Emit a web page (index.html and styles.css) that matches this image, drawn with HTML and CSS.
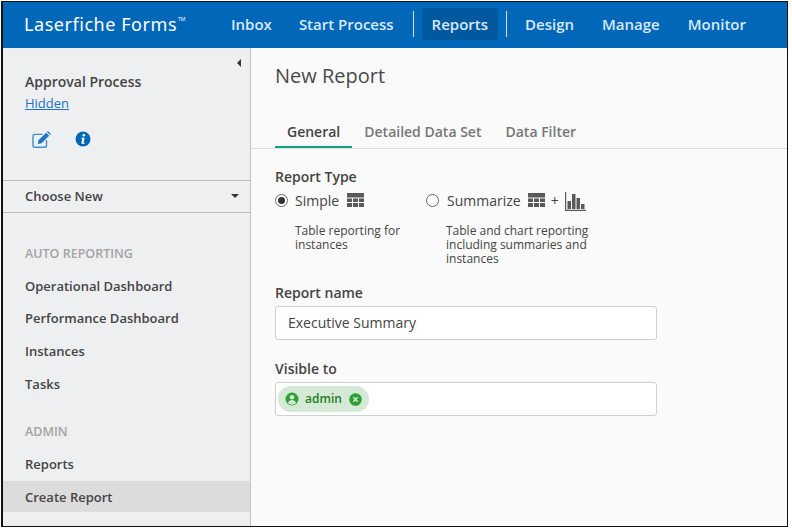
FILE: index.html
```html
<!DOCTYPE html>
<html lang="en">
<head>
    <meta charset="UTF-8">
    <title>New Report</title>
    <link rel="stylesheet" href="styles.css">
</head>
<body>
    <div class="frame">
        <header class="topbar">
            <div class="logo">Laserfiche Forms<span class="tm">TM</span></div>
            <nav class="nav">
                <a class="nav-item">Inbox</a>
                <a class="nav-item">Start Process</a>
                <span class="nav-sep"></span>
                <a class="nav-item active">Reports</a>
                <span class="nav-sep"></span>
                <a class="nav-item">Design</a>
                <a class="nav-item">Manage</a>
                <a class="nav-item">Monitor</a>
            </nav>
        </header>
        <div class="body-row">
            <aside class="sidebar">
                <div class="collapse-arrow"></div>
                <div class="process-info">
                    <div class="process-name">Approval Process</div>
                    <a class="process-link">Hidden</a>
                    <div class="process-icons">
                        <svg class="icon-edit" width="20" height="17" viewBox="0 0 20 17">
                            <path d="M14.500 9v5.500a1.800 1.800 0 0 1-1.800 1.800H2.800A1.800 1.800 0 0 1 1 14.500V5.200a1.800 1.800 0 0 1 1.800-1.800h7.700" fill="none" stroke="#3d8ed4" stroke-width="1.400"/>
                            <path d="M6.500 9.300l7.600-7.600 3 3-7.600 7.600-3.600.7z" fill="#1e74bf"/>
                            <path d="M15 .9l.9-.8 3 3-.8.9z" fill="#1e74bf"/>
                        </svg>
                        <svg class="icon-info" width="16" height="16" viewBox="0 0 16 16">
                            <circle cx="8" cy="8" r="7.500" fill="#0067b9"/>
                            <circle cx="8.800" cy="4.200" r="1.300" fill="#fff"/>
                            <path d="M6.400 6.700h3.200l-1 5h1v1H6.300l1-5h-1z" fill="#fff"/>
                        </svg>
                    </div>
                </div>
                <div class="choose-new">
                    <span>Choose New</span>
                    <span class="caret"></span>
                </div>
                <div class="side-section">
                    <div class="side-head">AUTO REPORTING</div>
                    <a class="side-item">Operational Dashboard</a>
                    <a class="side-item">Performance Dashboard</a>
                    <a class="side-item">Instances</a>
                    <a class="side-item">Tasks</a>
                </div>
                <div class="side-section admin">
                    <div class="side-head">ADMIN</div>
                    <a class="side-item">Reports</a>
                    <a class="side-item current">Create Report</a>
                </div>
            </aside>
            <main class="content">
                <h1 class="page-title">New Report</h1>
                <div class="tabs">
                    <a class="tab selected">General</a>
                    <a class="tab">Detailed Data Set</a>
                    <a class="tab">Data Filter</a>
                </div>
                <div class="form">
                    <div class="label">Report Type</div>
                    <div class="type-row">
                        <div class="type-option simple">
                            <div class="type-head">
                                <span class="radio checked"></span>
                                <span>Simple</span>
                                <svg class="table-icon" width="17" height="14" viewBox="0 0 17 14">
                                    <path d="M0 0h17v4.500H0zM0 5.500h5V9H0zM6 5.500h5V9H6zM12 5.500h5V9h-5zM0 10h5v4H0zM6 10h5v4H6zM12 10h5v4h-5z" fill="#595959"/>
                                </svg>
                            </div>
                            <p class="type-desc">Table reporting for instances</p>
                        </div>
                        <div class="type-option summarize">
                            <div class="type-head">
                                <span class="radio"></span>
                                <span>Summarize</span>
                                <svg class="table-icon" width="17" height="14" viewBox="0 0 17 14">
                                    <path d="M0 0h17v4.500H0zM0 5.500h5V9H0zM6 5.500h5V9H6zM12 5.500h5V9h-5zM0 10h5v4H0zM6 10h5v4H6zM12 10h5v4h-5z" fill="#595959"/>
                                </svg>
                                <span class="plus">+</span>
                                <svg class="chart-icon" width="21" height="19" viewBox="0 0 21 19">
                                    <path d="M0 0h1.200v17.800H21V19H0z" fill="#595959"/>
                                    <path d="M2.500 9h3.500v8H2.500zM7 2h3.500v15H7zM11.500 6h3.500v11h-3.500zM16 12h3.500v5H16z" fill="#595959"/>
                                </svg>
                            </div>
                            <p class="type-desc">Table and chart reporting including summaries and instances</p>
                        </div>
                    </div>
                    <div class="label name-label">Report name</div>
                    <div class="text-box">Executive Summary</div>
                    <div class="label visible-label">Visible to</div>
                    <div class="tag-box">
                        <span class="tag">
                            <svg width="14" height="14" viewBox="0 0 14 14">
                                <circle cx="7" cy="7" r="6.500" fill="#2f9e35"/>
                                <circle cx="7" cy="5.200" r="2.300" fill="#d5e9d7"/>
                                <path d="M2.900 11c.6-2 2.300-3 4.100-3s3.500 1 4.100 3a5.500 5.500 0 0 1-8.200 0z" fill="#d5e9d7"/>
                            </svg>
                            <span class="tag-text">admin</span>
                            <svg width="13" height="13" viewBox="0 0 13 13">
                                <circle cx="6.500" cy="6.500" r="6.300" fill="#2f9e35"/>
                                <path d="M4.300 4.300l4.400 4.400M8.700 4.300l-4.400 4.400" stroke="#d5e9d7" stroke-width="1.500"/>
                            </svg>
                        </span>
                    </div>
                </div>
            </main>
        </div>
    </div>
</body>
</html>
```

FILE: styles.css
```css
html, body {
    margin: 0;
    background-color: white;
}

body {
    padding: 1px 0 0 1px;
    font-family: "Open Sans", sans-serif;
    color: #444;
}

.frame {
    width: 787px;
    height: 526px;
    box-sizing: border-box;
    border: 1px solid #111;
    border-left-width: 2px;
    display: flex;
    flex-direction: column;
    background-color: #fafafa;
}

/* Top bar */
.topbar {
    height: 46px;
    box-sizing: border-box;
    padding-bottom: 2px;
    flex: none;
    background-color: #0067b9;
    display: flex;
    align-items: center;
}

.logo {
    margin-left: 21px;
    width: 197px;
    color: white;
    font-family: "Noto Sans", sans-serif;
    font-size: 18px;
    letter-spacing: 0.55px;
    white-space: nowrap;
}

.tm {
    font-size: 5px;
    vertical-align: 10px;
    margin-left: 1px;
    letter-spacing: 0;
}

.nav {
    display: flex;
    align-items: center;
    height: 32px;
}

.nav-item {
    color: #d9e9f6;
    font-size: 15px;
    font-weight: 600;
    padding: 0 10px;
    margin-right: 7px;
    line-height: 32px;
    border-radius: 3px;
}

.nav-item.active {
    background-color: #00589f;
    margin-left: 2px;
    margin-right: 8px;
}

.nav-item.active ~ .nav-item {
    margin-right: 8px;
}

.nav-sep {
    width: 1px;
    height: 26px;
    background-color: #cfe1f1;
    margin-left: 2px;
    margin-right: 6px;
}

.nav-item.active + .nav-sep {
    margin-left: 0;
    margin-right: 8px;
}

.body-row {
    flex: 1;
    display: flex;
    min-height: 0;
}

/* Sidebar */
.sidebar {
    width: 248px;
    flex: none;
    box-sizing: border-box;
    background-color: #eeeff1;
    border-right: 1px solid #c4c4c4;
    position: relative;
}

.collapse-arrow {
    position: absolute;
    top: 11px;
    right: 9px;
    border-style: solid;
    border-width: 4px 4px 4px 0;
    border-color: transparent #333 transparent transparent;
}

.process-info {
    height: 132px;
    box-sizing: border-box;
    padding: 24px 0 0 22px;
}

.process-name {
    font-size: 14px;
    font-weight: 600;
    line-height: 20px;
}

.process-link {
    display: block;
    margin-top: 1px;
    font-size: 13px;
    line-height: 20px;
    color: #1b72c8;
    text-decoration: underline;
}

.process-icons {
    display: flex;
    align-items: flex-start;
    margin: 18px 0 0 7px;
}

.icon-info {
    margin-left: 23px;
}

.choose-new {
    height: 33px;
    box-sizing: border-box;
    border-top: 1px solid #bdbdbd;
    border-bottom: 1px solid #bdbdbd;
    padding: 0 11px 2px 22px;
    display: flex;
    align-items: center;
    justify-content: space-between;
    font-size: 13px;
    font-weight: 600;
}

.side-section {
    padding-top: 31px;
}

.caret {
    border-style: solid;
    border-width: 4px 4px 0 4px;
    border-color: #333 transparent transparent transparent;
}

.side-section.admin {
    padding-top: 21.720px;
}

.side-head {
    padding-left: 22px;
    font-size: 12.500px;
    font-weight: 600;
    color: #a3a3a3;
    line-height: 20px;
    margin-bottom: 5.700px;
}

.side-item {
    display: block;
    padding-left: 22px;
    font-size: 13px;
    font-weight: 600;
    line-height: 32.670px;
}

.side-item.current {
    background-color: #dcdcdc;
    line-height: 30px;
    padding-top: 1px;
    margin-top: 0.600px;
}

/* Main content */
.content {
    flex: 1;
    min-width: 0;
}

.page-title {
    margin: 0;
    padding: 14px 0 0 24px;
    font-size: 20px;
    font-weight: 400;
    line-height: 27px;
    color: #4a4a4a;
}

.tabs {
    margin-top: 28px;
    padding-left: 24px;
    height: 32px;
    box-sizing: border-box;
    border-bottom: 1px solid #dedede;
    display: flex;
    color: #777;
    font-size: 14px;
    font-weight: 600;
}

.tab {
    padding: 0 12px;
    line-height: 30px;
    height: 31px;
    box-sizing: border-box;
}

.tab.selected {
    color: #444;
    border-bottom: 2px solid #10a484;
}

.form {
    padding: 18px 0 0 24px;
}

.label {
    font-size: 14px;
    font-weight: 600;
    line-height: 20px;
}

.type-row {
    display: flex;
    margin-top: 3px;
}

.type-option.simple {
    width: 151px;
}

.type-head {
    display: flex;
    align-items: center;
    height: 20px;
    font-size: 14px;
}

.radio {
    width: 11px;
    height: 11px;
    border: 1px solid #666;
    border-radius: 50%;
    background-color: white;
    margin-right: 7px;
    position: relative;
}

.summarize .radio {
    margin-right: 8px;
}

.radio.checked::after {
    content: "";
    position: absolute;
    left: 2px;
    top: 2px;
    width: 7px;
    height: 7px;
    border-radius: 50%;
    background-color: #333;
}

.table-icon {
    margin-left: 8px;
}

.summarize .table-icon {
    margin-left: 7px;
}

.plus {
    margin: 0 6px;
    font-size: 14px;
}

.chart-icon {
    margin-top: 2px;
}

.type-desc {
    margin: 14px 0 0 20px;
    font-size: 12px;
    line-height: 13.800px;
    color: #444;
}

.type-option.simple .type-desc {
    width: 118px;
}

.type-option.summarize .type-desc {
    width: 150px;
}

.name-label {
    margin-top: 18px;
}

.text-box, .tag-box {
    width: 382px;
    box-sizing: border-box;
    border: 1px solid #cfcfcf;
    border-radius: 3px;
    background-color: white;
}

.text-box {
    height: 34px;
    margin-top: 3px;
    padding-left: 12px;
    font-size: 14px;
    line-height: 32px;
}

.visible-label {
    margin-top: 19px;
}

.tag-box {
    height: 34px;
    margin-top: 3px;
    padding: 3px 3px 3px 2px;
}

.tag {
    display: inline-flex;
    align-items: center;
    height: 26px;
    box-sizing: border-box;
    padding: 0 7px;
    border-radius: 13px;
    background-color: #d5e9d7;
}

.tag-text {
    margin: 0 7px 2px 6px;
    font-size: 12px;
    font-weight: 600;
    color: #1d7d24;
}
```
